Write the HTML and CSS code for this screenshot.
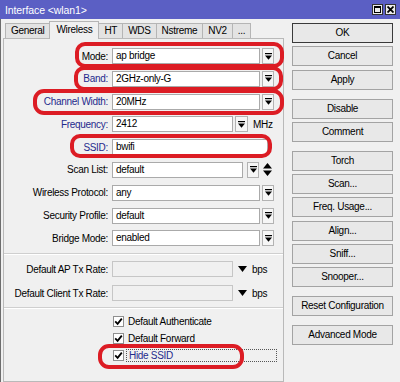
FILE: index.html
```html
<!DOCTYPE html>
<html lang="en">
<head>
    <meta charset="UTF-8">
    <meta name="viewport" content="width=device-width, initial-scale=1.0">
    <title>Interface &lt;wlan1&gt;</title>
    <link rel="stylesheet" href="styles.css">
</head>
<body>
    <div class="window">
        <div class="titlebar">
            <span class="title">Interface &lt;wlan1&gt;</span>
            <div class="title-buttons">
                <span class="title-btn">
                    <svg width="7" height="7" viewBox="0 0 7 7"><rect x="0.5" y="0.5" width="6" height="6" fill="none" stroke="#000"/><rect x="0" y="0" width="7" height="2"/></svg>
                </span>
                <span class="title-btn">
                    <svg width="7" height="7" viewBox="0 0 7 7"><path d="M0.5 0.5L6.5 6.5M6.5 0.5L0.5 6.5" stroke="#000" stroke-width="1.8"/></svg>
                </span>
            </div>
        </div>

        <div class="main">
            <div class="left">
                <div class="tabs">
                    <div class="tab">General</div>
                    <div class="tab active">Wireless</div>
                    <div class="tab">HT</div>
                    <div class="tab">WDS</div>
                    <div class="tab">Nstreme</div>
                    <div class="tab">NV2</div>
                    <div class="tab">...</div>
                </div>

                <div class="panel">
                    <div class="rows">
                        <div class="row">
                            <span class="label">Mode:</span>
                            <div class="field select">ap bridge</div>
                            <span class="drop"><svg width="7" height="7" viewBox="0 0 7 7"><rect width="7" height="1.2"/><path d="M0 2.6H7L3.5 6.8Z"/></svg></span>
                        </div>
                        <div class="row">
                            <span class="label changed">Band:</span>
                            <div class="field select">2GHz-only-G</div>
                            <span class="drop"><svg width="7" height="7" viewBox="0 0 7 7"><rect width="7" height="1.2"/><path d="M0 2.6H7L3.5 6.8Z"/></svg></span>
                        </div>
                        <div class="row">
                            <span class="label changed">Channel Width:</span>
                            <div class="field select">20MHz</div>
                            <span class="drop"><svg width="7" height="7" viewBox="0 0 7 7"><rect width="7" height="1.2"/><path d="M0 2.6H7L3.5 6.8Z"/></svg></span>
                        </div>
                        <div class="row">
                            <span class="label changed">Frequency:</span>
                            <div class="field freq">2412</div>
                            <span class="drop wide"><svg width="7" height="7" viewBox="0 0 7 7"><rect width="7" height="1.2"/><path d="M0 2.6H7L3.5 6.8Z"/></svg></span>
                            <span class="unit">MHz</span>
                        </div>
                        <div class="row">
                            <span class="label changed">SSID:</span>
                            <div class="field ssid">bwifi</div>
                        </div>
                        <div class="row">
                            <span class="label">Scan List:</span>
                            <div class="field scan">default</div>
                            <span class="drop spaced"><svg width="7" height="7" viewBox="0 0 7 7"><rect width="7" height="1.2"/><path d="M0 2.6H7L3.5 6.8Z"/></svg></span>
                            <span class="updown"><svg width="9" height="13" viewBox="0 0 9 13"><path d="M4.5 0L9 5.5H0Z M0 7.5H9L4.5 13Z"/></svg></span>
                        </div>
                        <div class="row">
                            <span class="label">Wireless Protocol:</span>
                            <div class="field select">any</div>
                            <span class="drop"><svg width="7" height="7" viewBox="0 0 7 7"><rect width="7" height="1.2"/><path d="M0 2.6H7L3.5 6.8Z"/></svg></span>
                        </div>
                        <div class="row">
                            <span class="label">Security Profile:</span>
                            <div class="field select">default</div>
                            <span class="drop"><svg width="7" height="7" viewBox="0 0 7 7"><rect width="7" height="1.2"/><path d="M0 2.6H7L3.5 6.8Z"/></svg></span>
                        </div>
                        <div class="row">
                            <span class="label">Bridge Mode:</span>
                            <div class="field select">enabled</div>
                            <span class="drop"><svg width="7" height="7" viewBox="0 0 7 7"><rect width="7" height="1.2"/><path d="M0 2.6H7L3.5 6.8Z"/></svg></span>
                        </div>
                    </div>

                    <div class="sep"></div>

                    <div class="rows rates">
                        <div class="row">
                            <span class="label">Default AP Tx Rate:</span>
                            <div class="field rate"></div>
                            <span class="arrow"><svg width="9" height="6" viewBox="0 0 9 6"><path d="M0 0H9L4.5 6Z"/></svg></span>
                            <span class="unit">bps</span>
                        </div>
                        <div class="row">
                            <span class="label">Default Client Tx Rate:</span>
                            <div class="field rate"></div>
                            <span class="arrow"><svg width="9" height="6" viewBox="0 0 9 6"><path d="M0 0H9L4.5 6Z"/></svg></span>
                            <span class="unit">bps</span>
                        </div>
                    </div>

                    <div class="sep second"></div>

                    <div class="checks">
                        <div class="check-row">
                            <span class="checkbox"><svg width="9" height="9" viewBox="0 0 9 9"><path d="M1.2 4.4L3.6 6.8L7.8 1.6" fill="none" stroke="#000" stroke-width="1.8"/></svg></span>
                            <span class="check-label">Default Authenticate</span>
                        </div>
                        <div class="check-row">
                            <span class="checkbox"><svg width="9" height="9" viewBox="0 0 9 9"><path d="M1.2 4.4L3.6 6.8L7.8 1.6" fill="none" stroke="#000" stroke-width="1.8"/></svg></span>
                            <span class="check-label">Default Forward</span>
                        </div>
                        <div class="check-row">
                            <span class="checkbox"><svg width="9" height="9" viewBox="0 0 9 9"><path d="M1.2 4.4L3.6 6.8L7.8 1.6" fill="none" stroke="#000" stroke-width="1.8"/></svg></span>
                            <span class="check-label focused">Hide SSID</span>
                        </div>
                    </div>
                </div>
            </div>

            <div class="buttons">
                <div class="btn-group">
                    <div class="btn default">OK</div>
                    <div class="btn">Cancel</div>
                    <div class="btn">Apply</div>
                </div>
                <div class="btn-group">
                    <div class="btn">Disable</div>
                    <div class="btn">Comment</div>
                </div>
                <div class="btn-group">
                    <div class="btn">Torch</div>
                    <div class="btn">Scan...</div>
                    <div class="btn">Freq. Usage...</div>
                    <div class="btn">Align...</div>
                    <div class="btn">Sniff...</div>
                    <div class="btn">Snooper...</div>
                </div>
                <div class="btn-group">
                    <div class="btn">Reset Configuration</div>
                </div>
                <div class="btn-group">
                    <div class="btn">Advanced Mode</div>
                </div>
            </div>
        </div>

        <!-- red marker annotations drawn over the form -->
        <svg class="marks" width="400" height="382" viewBox="0 0 400 382">
            <rect x="77" y="44" width="205" height="22" rx="8"/>
            <rect x="76" y="68" width="205" height="21" rx="8"/>
            <rect x="35" y="91" width="247" height="22" rx="9"/>
            <rect x="72" y="136" width="198" height="20" rx="8"/>
            <rect x="100" y="346" width="142" height="21" rx="9"/>
        </svg>
    </div>
</body>
</html>
```

FILE: styles.css
```css
* {
    box-sizing: border-box;
}

body {
    margin: 0;
    font-family: "Liberation Sans", Arial, sans-serif;
    font-size: 10px;
    letter-spacing: -0.3px;
    color: #000;
}

.window {
    position: relative;
    width: 400px;
    height: 382px;
    overflow: hidden;
    background-color: #f0f0f0;
}

.titlebar {
    height: 19px;
    display: flex;
    align-items: center;
    justify-content: space-between;
    padding: 0 4px 0 5px;
    background-color: #5b5fc4;
    color: #fff;
}

.title {
    font-size: 10.5px;
    letter-spacing: -0.1px;
}

.title-buttons {
    display: flex;
    gap: 2px;
}

.title-btn {
    width: 11px;
    height: 11px;
    display: flex;
    align-items: center;
    justify-content: center;
    background-color: #ececec;
    border: 1px solid #333;
}

.main {
    display: flex;
    height: 363px;
    border-left: 1px solid #6d6d6d;
    padding-left: 2px;
}

.left {
    width: 281px;
    display: flex;
    flex-direction: column;
}

.tabs {
    height: 20px;
    margin-bottom: -1px;
    padding-left: 2px;
    display: flex;
    align-items: flex-end;
}

.tab {
    height: 15px;
    line-height: 14px;
    margin-bottom: 1px;
    margin-right: -1px;
    padding: 0 5px;
    background-color: #e3e3e3;
    border: 1px solid #b5b5b5;
    border-bottom: none;
}

.tab.active {
    position: relative;
    height: 18px;
    line-height: 16px;
    margin-bottom: 0;
    padding: 0 6px;
    background-color: #f0f0f0;
}

.panel {
    flex: 1;
    padding-top: 9px;
    border: 1px solid #b9b9b9;
}

.rows {
    display: flex;
    flex-direction: column;
    gap: 6.8px;
}

.rows.rates {
    gap: 8px;
}

.row {
    height: 16px;
    display: flex;
    align-items: center;
}

.label {
    width: 104px;
    margin-right: 4px;
    flex-shrink: 0;
    text-align: right;
    white-space: nowrap;
}

.label.changed {
    color: #1f2a8c;
}

.field {
    height: 16px;
    line-height: 14px;
    padding-left: 3px;
    background-color: #fff;
    border: 1px solid #aaa;
    white-space: nowrap;
}

.field.select {
    width: 148px;
}

.field.freq {
    width: 121px;
}

.field.ssid {
    width: 156px;
}

.field.scan {
    width: 131px;
}

.field.rate {
    width: 121px;
    background-color: #f0f0f0;
    border-color: #c6c6c6;
}

.drop {
    width: 12px;
    height: 16px;
    margin-left: 2px;
    display: flex;
    align-items: center;
    justify-content: center;
    background-color: #f6f6f6;
    border: 1px solid #b3b3b3;
}

.drop.wide {
    width: 13px;
}

.drop.spaced {
    margin-left: 4px;
}

.updown {
    margin-left: 4px;
    display: flex;
}

.arrow {
    margin-left: 5px;
    display: flex;
}

.unit {
    margin-left: 5px;
}

.sep {
    margin: 7px 0 6px;
    border-top: 1px solid #cfcfcf;
    border-bottom: 1px solid #fff;
}

.sep.second {
    margin: 6px 0 4px;
}

.check-row {
    height: 17px;
    padding-left: 109px;
    display: flex;
    align-items: center;
}

.checkbox {
    width: 11px;
    height: 11px;
    margin-right: 2px;
    display: flex;
    align-items: center;
    justify-content: center;
    background-color: #fff;
    border: 1px solid #8f8f8f;
}

.check-label {
    padding-left: 2px;
}

.check-label.focused {
    width: 151px;
    height: 13px;
    line-height: 11px;
    color: #1f2a8c;
    border: 1px dotted #555;
}

.buttons {
    width: 101px;
    margin-left: 8px;
    padding-top: 4px;
    display: flex;
    flex-direction: column;
}

.btn-group {
    display: flex;
    flex-direction: column;
    gap: 3.3px;
}

.btn-group + .btn-group {
    margin-top: 9px;
}

.btn {
    height: 20px;
    line-height: 18px;
    text-align: center;
    background-color: #e8e8e8;
    border: 1px solid #a3a3a3;
    white-space: nowrap;
}

.btn.default {
    border-color: #3a3a3a;
}

.marks {
    position: absolute;
    top: 0;
    left: 0;
    pointer-events: none;
}

.marks rect {
    fill: none;
    stroke: #dc1c24;
    stroke-width: 4;
}
```
